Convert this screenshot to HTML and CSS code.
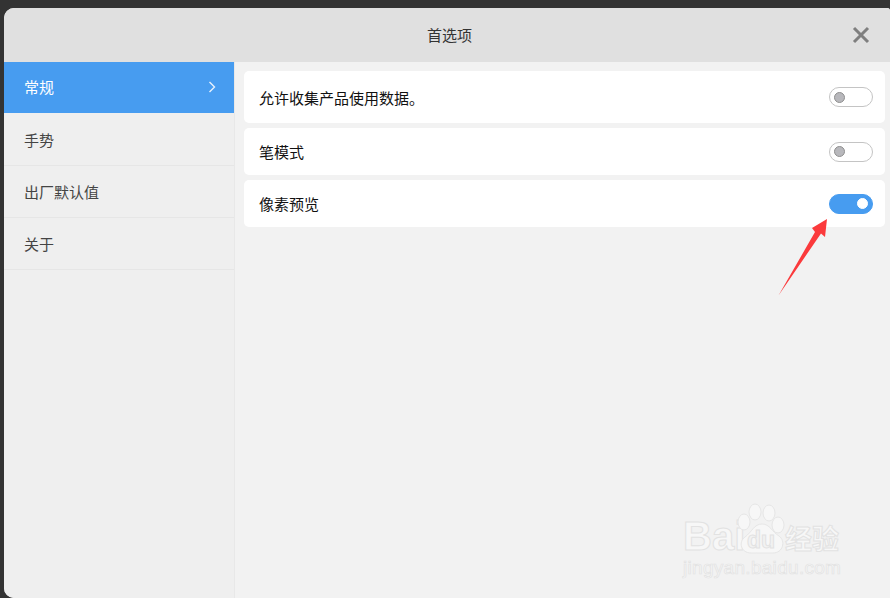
FILE: index.html
```html
<!DOCTYPE html>
<html lang="zh">
<head>
<meta charset="utf-8">
<title>首选项</title>
<link rel="stylesheet" href="styles.css">
</head>
<body>
<div class="dialog">
  <header class="titlebar">
    <span class="title">首选项</span>
    <svg class="close" width="18" height="18" viewBox="0 0 18 18"><path d="M2 2L16 16M16 2L2 16" stroke="#7f7f7f" stroke-width="3" fill="none"/></svg>
  </header>
  <div class="main">
    <nav class="sidebar">
      <div class="nav active"><span>常规</span>
        <svg width="8" height="12" viewBox="0 0 8 12"><path d="M1.5 1L6.5 6L1.5 11" stroke="#e8f2fd" stroke-width="1.4" fill="none"/></svg>
      </div>
      <div class="nav"><span>手势</span></div>
      <div class="nav"><span>出厂默认值</span></div>
      <div class="nav"><span>关于</span></div>
    </nav>
    <section class="content">
      <div class="card first"><span class="label">允许收集产品使用数据。</span><span class="toggle"><i></i></span></div>
      <div class="card"><span class="label">笔模式</span><span class="toggle"><i></i></span></div>
      <div class="card"><span class="label">像素预览</span><span class="toggle on"><i></i></span></div>
    </section>
  </div>
</div>
<svg class="arrow" width="52" height="82" viewBox="0 0 52 82"><path d="M0.500 80.500L37 17L34 13L49 4L47 22L43 18.500Z" fill="#fb3a3c"/></svg>
<div class="watermark">
  <div class="brand">
    <span class="bai">Bai</span>
    <svg class="paw" width="50" height="54" viewBox="0 0 50 54">
      <g fill="#f7f7f7" stroke="#e6e6e6" stroke-width="1">
        <ellipse cx="7" cy="19" rx="6" ry="8"/>
        <ellipse cx="18" cy="9" rx="6" ry="8"/>
        <ellipse cx="32" cy="10" rx="6" ry="8"/>
        <ellipse cx="41" cy="22" rx="6" ry="8"/>
        <path d="M25 21C33 21 35 29 42 33C49 38 46 50 36 50C30 50 20 50 14 50C4 50 1 39 8 34C15 29 17 21 25 21Z"/>
      </g>
    </svg>
    <span class="du">du</span>
    <span class="jy">经验</span>
  </div>
  <div class="url">jingyan.baidu.com</div>
</div>
</body>
</html>
```
FILE: styles.css
```css
* { box-sizing: border-box; }
html, body { margin: 0; height: 100%; }
body {
  width: 890px;
  height: 598px;
  overflow: hidden;
  background: #333333;
  padding: 8px 0 0 4px;
  font-family: "Noto Sans CJK SC", "Liberation Sans", sans-serif;
  position: relative;
}
.dialog {
  width: 886px;
  height: 590px;
  border-radius: 10px 3px 0 10px;
  overflow: hidden;
  background: #f2f2f2;
  display: flex;
  flex-direction: column;
}
.titlebar {
  height: 54px;
  flex: none;
  background: #e0e0e0;
  display: flex;
  align-items: center;
  justify-content: center;
  position: relative;
  padding: 0 0 2px 5px;
}
.title { font-size: 15px; color: #333; }
.close { position: absolute; right: 20px; top: 18px; }
.main { flex: 1; display: flex; min-height: 0; }
.sidebar {
  width: 231px;
  flex: none;
  background: #efefef;
  border-right: 1px solid #e8e8e8;
}
.nav {
  height: 52px;
  padding: 0 18px 1px 20px;
  display: flex;
  align-items: center;
  justify-content: space-between;
  font-size: 15px;
  color: #444;
  border-bottom: 1px solid #e6e6e6;
}
.nav.active {
  height: 51px;
  width: 230px;
  margin-bottom: 1px;
  background: #479cf0;
  color: #fff;
  border-bottom: 0;
  padding-bottom: 2px;
}
.content {
  flex: 1;
  padding: 9px 5px 0 9px;
  display: flex;
  flex-direction: column;
  gap: 5px;
}
.card {
  height: 47px;
  background: #fff;
  border-radius: 5px;
  display: flex;
  align-items: center;
  justify-content: space-between;
  padding: 0 12px 0 15px;
  font-size: 15px;
  color: #111;
}
.card.first { height: 52px; }
.toggle {
  width: 44px;
  height: 20px;
  border-radius: 10px;
  background: #fff;
  border: 1px solid #c4c4c4;
  display: flex;
  align-items: center;
  padding-left: 4px;
}
.toggle i {
  width: 11px;
  height: 11px;
  border-radius: 50%;
  background: #b8b8bc;
  border: 1px solid #8f8f8f;
}
.toggle.on {
  background: #479cf0;
  border-color: #479cf0;
  justify-content: flex-end;
  padding: 0 4px 0 0;
}
.toggle.on i { background: #fff; border-color: #fff; }
.arrow { position: absolute; left: 778px; top: 215px; }
.watermark {
  position: absolute;
  left: 683px;
  top: 500px;
  width: 170px;
  color: #f7f7f7;
  font-family: "Liberation Sans", "Noto Sans CJK SC", sans-serif;
}
.brand { position: relative; height: 56px; }
.brand span { position: absolute; -webkit-text-stroke: 1px #e2e2e2; font-weight: 700; white-space: nowrap; }
.bai { left: 0; top: 15px; font-size: 40px; line-height: 42px; }
.paw { position: absolute; left: 54px; top: 3px; }
.brand .du { left: 64px; top: 28px; font-size: 23px; line-height: 24px; color: #f2f2f2; }
.brand .jy { left: 102px; top: 21px; font-size: 27px; line-height: 34px; font-family: "Noto Sans CJK SC", sans-serif; }
.url {
  font-size: 19px;
  line-height: 22px;
  margin-top: 1px;
  letter-spacing: 0.300px;
  white-space: nowrap;
  -webkit-text-stroke: 0.700px #e2e2e2;
}
```
